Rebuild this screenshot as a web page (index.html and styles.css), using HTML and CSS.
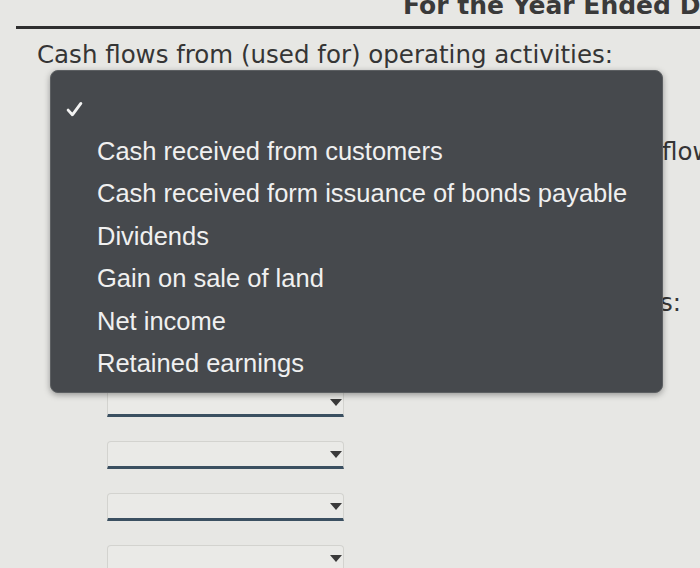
FILE: index.html
```html
<!DOCTYPE html>
<html>
<head>
<meta charset="utf-8">
<link rel="stylesheet" href="styles.css">
</head>
<body>
<div class="page">
  <div class="title">For the Year Ended December 31</div>
  <div class="rule"></div>
  <div class="label">Cash flows from (used for) operating activities:</div>
  <div class="under">
    <div class="uline u1">flows from operating activities</div>
    <div class="uline u2">Cash flows from (used for) investing activities:</div>
  </div>
  <div class="selects">
    <div class="sel"><span class="arrow"></span></div>
    <div class="sel"><span class="arrow"></span></div>
    <div class="sel"><span class="arrow"></span></div>
    <div class="sel"><span class="arrow"></span></div>
  </div>

  <div class="menu">
    <div class="check-row">
      <svg class="check" width="17" height="17" viewBox="0 0 16 16"><path d="M2 8.6 L6 13 L14 2.3" fill="none" stroke="#f2f2f2" stroke-width="2.7" stroke-linecap="round" stroke-linejoin="round"/></svg>
    </div>
    <div class="item">Cash received from customers</div>
    <div class="item">Cash received form issuance of bonds payable</div>
    <div class="item">Dividends</div>
    <div class="item">Gain on sale of land</div>
    <div class="item">Net income</div>
    <div class="item">Retained earnings</div>
  </div>
</div>
</body>
</html>
```
FILE: styles.css
```css
html, body {
  margin: 0;
  padding: 0;
  width: 700px;
  height: 568px;
  overflow: hidden;
  background: #e7e7e4;
}
.page {
  position: relative;
  width: 700px;
  height: 568px;
  overflow: hidden;
  font-family: "DejaVu Sans", Verdana, sans-serif;
  color: #353535;
}
.title {
  margin-top: -8px;
  padding-left: 403px;
  font-weight: bold;
  font-size: 25px;
  line-height: 28px;
  white-space: nowrap;
  color: #3a3a3a;
}
.rule {
  margin-top: 6px;
  margin-left: 16px;
  height: 3px;
  background: #2f2f2f;
}
.label {
  margin-top: 11px;
  padding-left: 37px;
  font-size: 24.5px;
  line-height: 30px;
  white-space: nowrap;
}
.under {
  padding-top: 67px;
}
.uline {
  font-size: 24.5px;
  line-height: 30px;
  white-space: nowrap;
}
.u1 {
  padding-left: 662px;
}
.u2 {
  margin-top: 121px;
  width: 681px;
  text-align: right;
}
.selects {
  position: absolute;
  left: 107px;
  top: 389px;
  display: flex;
  flex-direction: column;
  gap: 24px;
}
.sel {
  position: relative;
  width: 235px;
  height: 24px;
  border: 1px solid #d3d3cf;
  border-bottom: 3px solid #3b5061;
  border-radius: 4px 4px 0 0;
  background: #eaeae7;
}
.arrow {
  position: absolute;
  right: 1px;
  top: 9px;
  width: 0;
  height: 0;
  border-left: 6px solid transparent;
  border-right: 6px solid transparent;
  border-top: 7px solid #3a3a3a;
}
.menu {
  position: absolute;
  left: 50px;
  top: 70px;
  width: 613px;
  height: 323px;
  box-sizing: border-box;
  padding: 17px 0 0 0;
  background: #46494d;
  border: 1px solid #5c5f62;
  border-radius: 8px;
  box-shadow: 0 2px 6px rgba(0,0,0,0.35);
  font-family: "Liberation Sans", Arial, sans-serif;
  color: #f0f0f0;
}
.check-row {
  height: 42px;
  padding-left: 15px;
  display: flex;
  align-items: center;
}
.item {
  padding-left: 46px;
  font-size: 25.5px;
  line-height: 42.4px;
  white-space: nowrap;
}
```
